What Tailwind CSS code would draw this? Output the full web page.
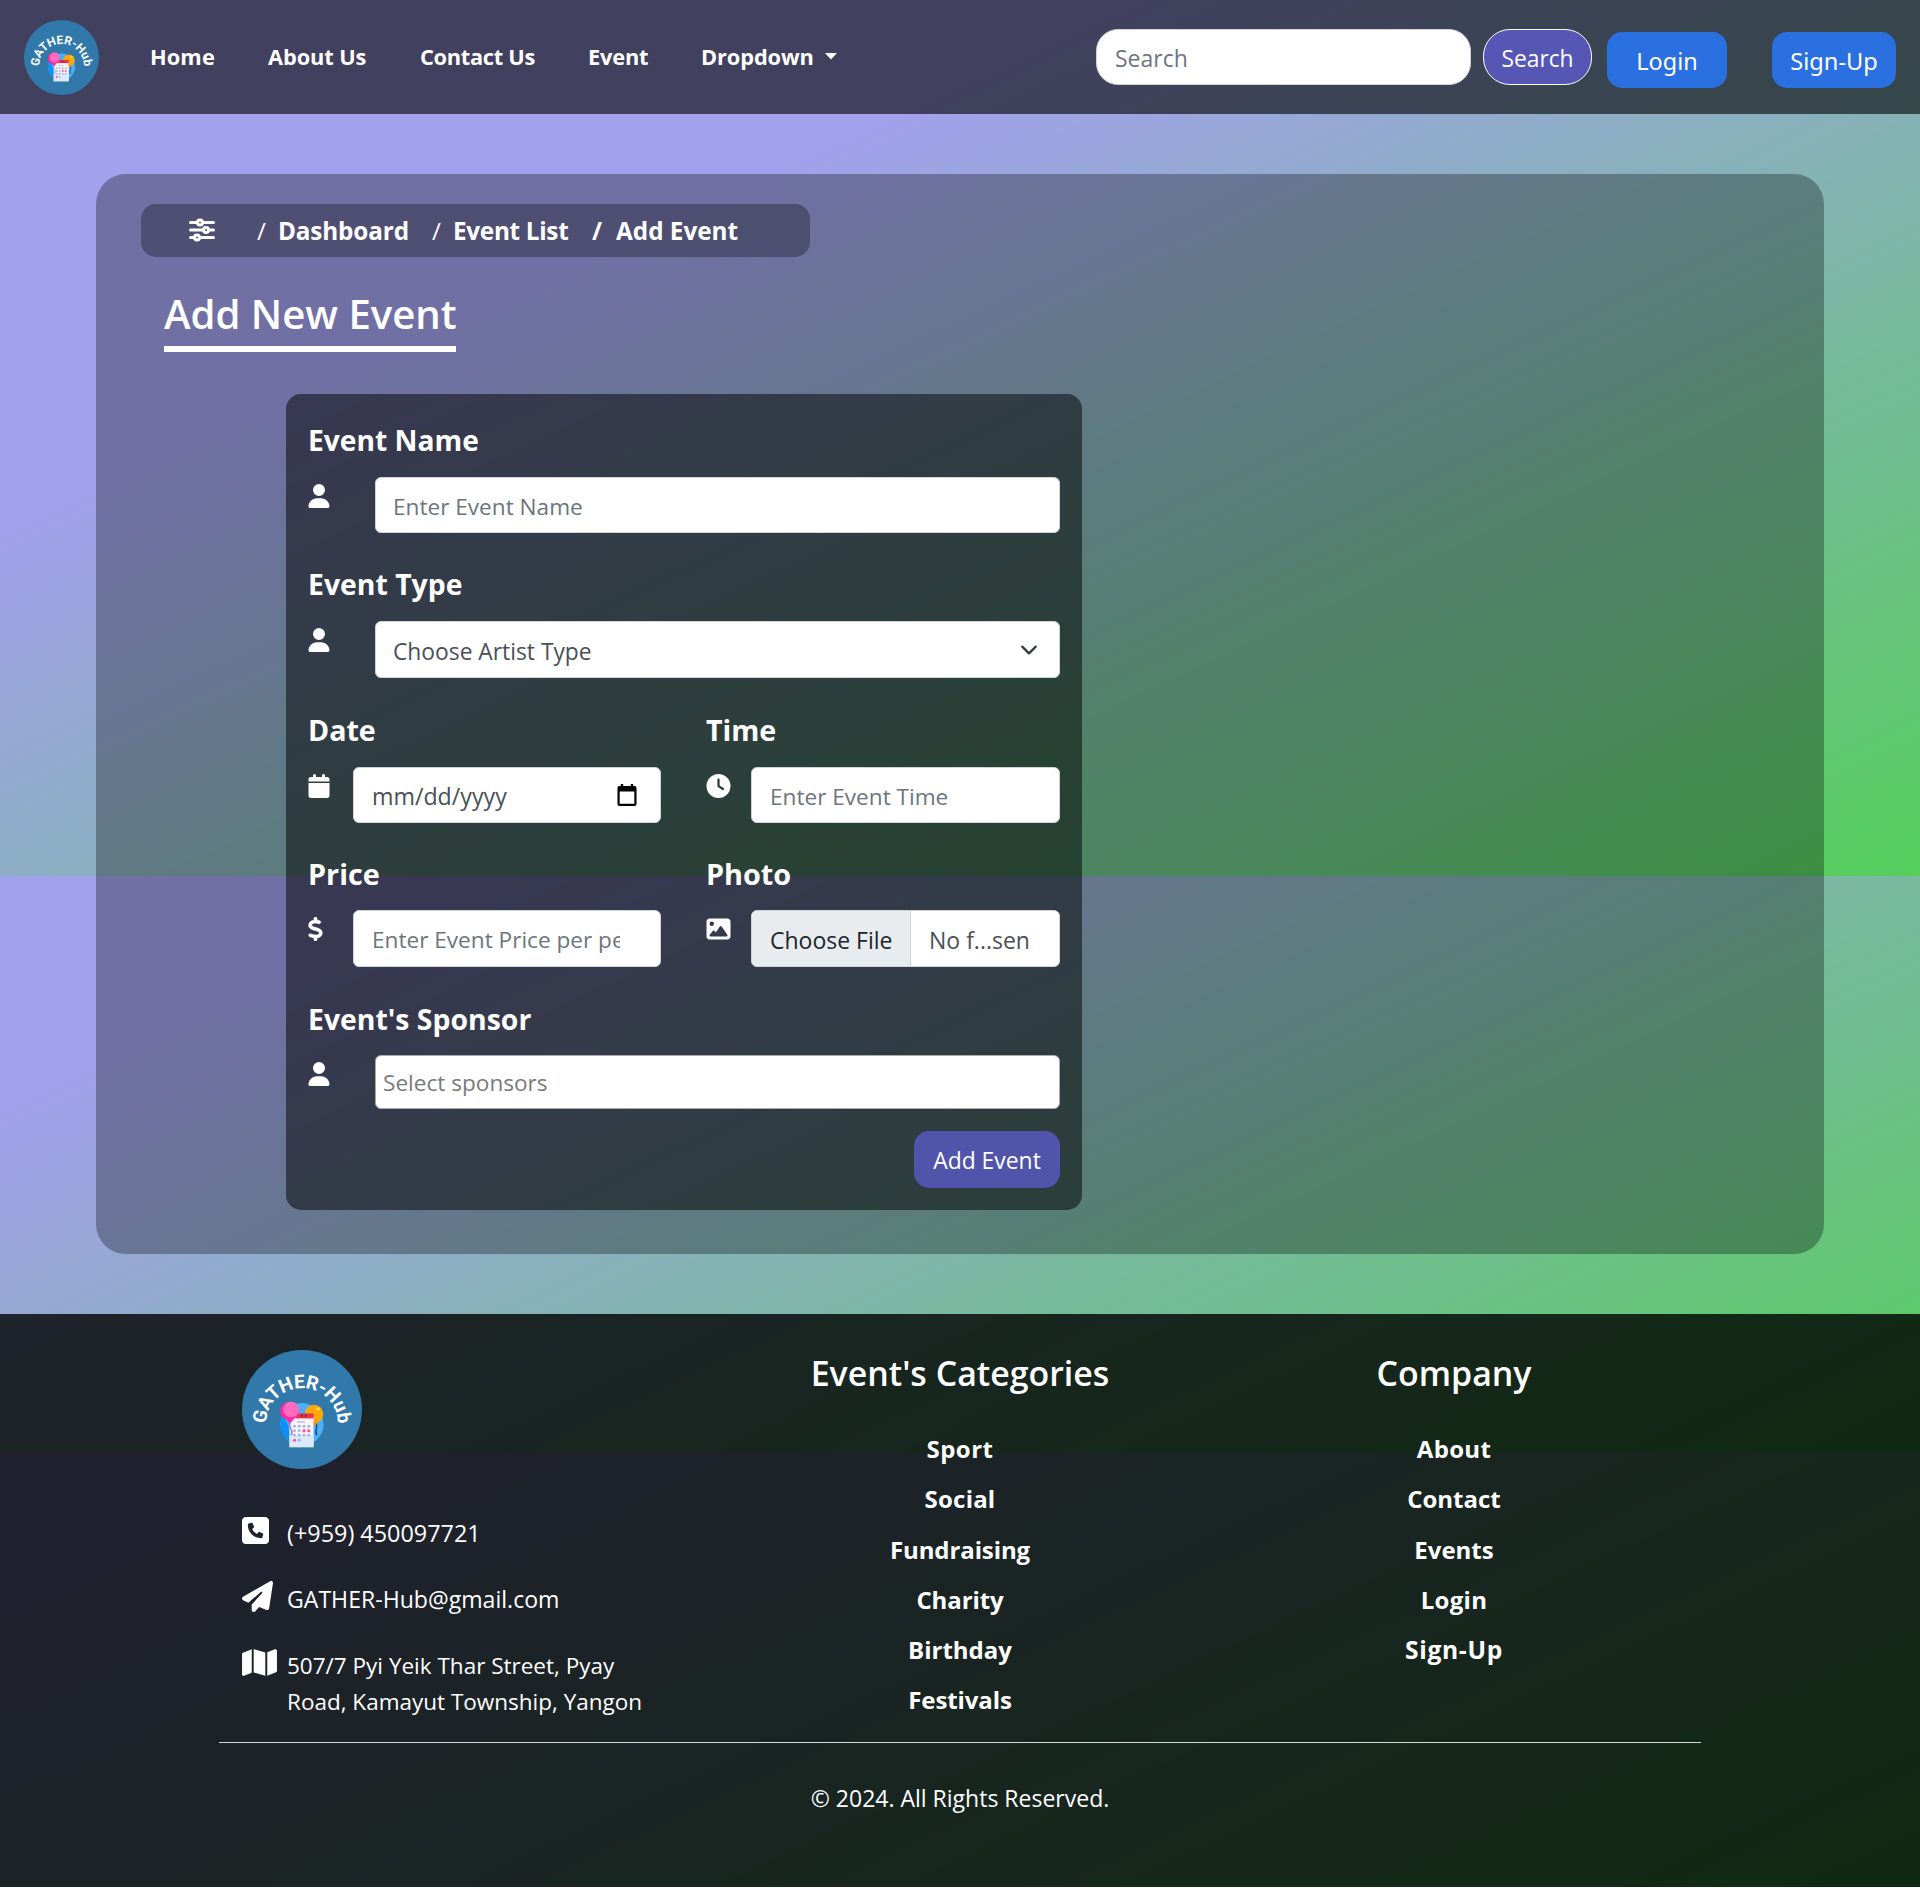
<!DOCTYPE html>
<html lang="en">
<head>
<meta charset="utf-8">
<title>GATHER-Hub | Add Event</title>
<script src="https://cdn.jsdelivr.net/npm/@tailwindcss/browser@4"></script>
</head>
<body class="w-[1920px] h-[1888px] overflow-x-hidden bg-white font-['Open_Sans','Noto_Sans',sans-serif] text-[22.6px] text-white">
<svg class="hidden">
  <symbol id="logo" viewBox="0 0 120 120">
    <defs><clipPath id="disk"><circle cx="60" cy="75" r="21.5"/></clipPath><path id="arc" d="M24 74.500A36 36 0 0 1 96 74.500"/></defs>
    <circle cx="60" cy="60" r="60" fill="#3079aa"/>
    <text fill="#fff" font-family="Roboto, sans-serif" font-weight="700" font-size="19"><textPath href="#arc" textLength="113" lengthAdjust="spacing">GATHER-Hub</textPath></text>
    <circle cx="60" cy="75" r="21.500" fill="#4bb0fb"/>
    <path d="M41 65a21.500 21.500 0 0 0 9 29l-4-18z" fill="#0a92fa"/>
    <path d="M73 73c5 5-2 8 2 13" fill="none" stroke="#0b4f8c" stroke-width="1.500"/>
    <circle cx="72" cy="64.500" r="9.300" fill="#fca80c"/><path d="M69 72l4 5 3-5z" fill="#fc8f00"/><ellipse cx="76" cy="59.500" rx="2" ry="1.500" fill="#ffe04a"/>
    <g clip-path="url(#disk)"><path d="M47.500 68h24v30h-24z" fill="#fdf3f6"/><path d="M47.500 86h24v12h-24z" fill="#dceafa"/></g>
    <path d="M54 64h17.500v5H54z" fill="#e6354d"/><path d="M59 65h1.500v2.500H59zm4 0h1.500v2.500H63z" fill="#8c1d38"/>
    <path d="M55 72.500h8" stroke="#a9c9ee" stroke-width="1.500"/>
    <g fill="#9dbbe6"><circle cx="52.500" cy="77" r="1.500"/><circle cx="57.200" cy="77" r="1.500"/><circle cx="62" cy="77" r="1.500"/><circle cx="66.800" cy="77" r="1.500"/><circle cx="52.500" cy="81.500" r="1.500"/><circle cx="57.200" cy="81.500" r="1.500"/><circle cx="52.500" cy="86" r="1.500"/><circle cx="57.200" cy="86" r="1.500"/><circle cx="62" cy="86" r="1.500"/><circle cx="66.800" cy="86" r="1.500"/><circle cx="57.200" cy="91" r="1.500"/></g>
    <g fill="#fb4fa8"><circle cx="62" cy="81.500" r="1.600"/><circle cx="66.800" cy="81.500" r="1.600"/><circle cx="52.500" cy="91" r="1.600"/></g>
    <path d="M48 73c-3 6 5 7 1 13" fill="none" stroke="#9b7bc4" stroke-width="1.500"/>
    <circle cx="47.600" cy="61.500" r="9.400" fill="#fb2aa2"/><circle cx="49.200" cy="60" r="7.900" fill="#ff6cc0"/><path d="M44.500 70h7l-3.500 4z" fill="#fb2aa2"/>
  </symbol>
  <symbol id="user" viewBox="0 0 448 512"><path d="M224 256A128 128 0 1 0 224 0a128 128 0 1 0 0 256zm-45.700 48C79.800 304 0 383.800 0 482.300C0 498.700 13.300 512 29.700 512H418.300c16.400 0 29.700-13.300 29.700-29.700C448 383.800 368.200 304 269.700 304H178.300z"/></symbol>
</svg>

<div class="h-[1887px] bg-no-repeat bg-[linear-gradient(155deg,#a2a1ec_30%,#55ce5c),linear-gradient(155deg,#a2a1ec_30%,#55ce5c),linear-gradient(155deg,#a2a1ec_30%,#55ce5c)] bg-[position:0_0,0_576px,0_1011px] bg-[size:100%_876px,100%_877px,100%_877px]">

  <nav class="flex h-[114px] bg-black/60 pl-6">
    <svg class="mt-5 size-[75px]"><use href="#logo"/></svg>
    <div class="ml-[51px] flex h-[114px] items-center text-[21.8px] font-bold">
      <a class="w-[118px] tracking-[0.1px]">Home</a>
      <a class="w-[152px] tracking-[-0.1px]">About Us</a>
      <a class="w-[168px] tracking-[-0.3px]">Contact Us</a>
      <a class="w-[113px] tracking-[-0.2px]">Event</a>
      <a class="w-[124px] tracking-[-0.1px]">Dropdown</a>
      <svg class="-mt-0.5 h-[7px] w-3" viewBox="0 0 12 7" fill="#fff"><path d="M0 0h12L6 6.500z"/></svg>
    </div>
    <input class="mt-[29px] ml-[259px] h-14 w-[375px] rounded-[22px] border border-[#ced4da] bg-white pt-0.5 pl-[18px] text-[23px] placeholder:text-[#6c757d]" placeholder="Search">
    <button class="mt-[29px] ml-3 h-14 w-[109px] rounded-[27px] border border-white bg-[#5656b4] pt-1 text-[22.8px]">Search</button>
    <button class="mt-8 ml-[15px] h-14 w-[120px] rounded-[15px] bg-[#2b70e0] pt-1 font-['Noto_Sans'] text-[23.4px]">Login</button>
    <button class="mt-8 ml-[45px] h-14 w-[124px] rounded-[15px] bg-[#2b70e0] pt-1 font-['Noto_Sans'] text-[23.6px]">Sign-Up</button>
  </nav>

  <main class="mx-24 mt-[60px] h-[1080px] rounded-[30px] bg-black/30 px-[45px] pt-[30px]">
    <div class="flex h-[53px] w-[669px] items-center rounded-[15px] bg-black/30 pl-12 text-[24.3px] font-bold leading-[51px]">
      <svg class="-mt-0.5 h-[26px] w-[68px]" viewBox="0 0 68 26" fill="none" stroke="#fff" stroke-width="3" stroke-linecap="round"><path d="M1.500 5.500h6M14.500 5.500h10M1.500 13h12M20.500 13h4M1.500 20.500h3M11.500 20.500h13"/><circle cx="11" cy="5.500" r="2.500"/><circle cx="17" cy="13" r="2.500"/><circle cx="8" cy="20.500" r="2.500"/></svg>
      <span class="w-[21px] font-normal">/</span><a class="w-[154px] tracking-[-0.15px]">Dashboard</a>
      <span class="w-[21px] font-normal">/</span><a class="w-[139px] tracking-[-0.3px]">Event List</a>
      <span class="w-[24px]">/</span><span>Add Event</span>
    </div>
    <div class="mt-[25px] ml-[23px] w-[292px] whitespace-nowrap border-b-6 border-white text-[40.1px] leading-[63px] font-semibold"><h1 class="h-[64px]">Add New Event</h1></div>

    <form class="mt-[42px] ml-[145px] flex h-[816px] w-[796px] flex-col rounded-[15px] bg-black/50 px-[22px] pt-7">
      <label class="text-[28.2px] leading-9 font-bold">Event Name</label>
      <div class="mt-[19px] flex h-14">
        <svg class="mt-[7px] h-6 w-[22px]" fill="#fff"><use href="#user"/></svg>
        <input class="ml-[45px] h-14 w-[685px] rounded-[6px] border border-[#ced4da] bg-white pt-0.5 pl-[17px] placeholder:text-[#6c757d]" placeholder="Enter Event Name">
      </div>

      <label class="mt-[33px] text-[28.4px] leading-9 font-bold">Event Type</label>
      <div class="mt-[19px] flex h-[57px]">
        <svg class="mt-[7px] h-6 w-[22px]" fill="#fff"><use href="#user"/></svg>
        <div class="ml-[45px] flex h-[57px] w-[685px] items-center justify-between rounded-[6px] border border-[#ced4da] bg-white pt-[5px] pr-[21px] pl-[17px] text-[22.8px] text-[#495057]"><span>Choose Artist Type</span>
          <svg class="-mt-[5px] h-[18px] w-[18px]" viewBox="0 0 16 16" fill="none" stroke="#343a40" stroke-width="2" stroke-linecap="round" stroke-linejoin="round"><path d="m2 5 6 6 6-6"/></svg></div>
      </div>

      <div class="mt-[34px] grid grid-cols-2 text-[28.6px] leading-9 font-bold"><label>Date</label><label class="pl-[22px]">Time</label></div>
      <div class="mt-[19px] flex h-14">
        <svg class="mt-[7px] h-6 w-[22px]" viewBox="0 0 448 512" fill="#fff"><path d="M96 32V64H48C21.500 64 0 85.500 0 112v48H448V112c0-26.500-21.500-48-48-48H352V32c0-17.700-14.300-32-32-32s-32 14.300-32 32V64H160V32c0-17.700-14.300-32-32-32S96 14.300 96 32zM448 192H0V464c0 26.500 21.500 48 48 48H400c26.500 0 48-21.500 48-48V192z"/></svg>
        <div class="ml-[23px] flex h-14 w-[308px] items-center justify-between rounded-[6px] border border-[#ced4da] bg-white pt-[3px] pr-[23px] pl-[18px] text-[23.2px] text-[#495057]"><span>mm/dd/yyyy</span>
          <svg class="-mt-[3px] h-[22px] w-[20px]" viewBox="0 0 21 22" preserveAspectRatio="none" fill="#000"><path d="M4 0h2.500v2h8V0H17v2h1.500A2 2 0 0 1 20.500 4v16a2 2 0 0 1-2 2h-16a2 2 0 0 1-2-2V4a2 2 0 0 1 2-2H4zM2.800 7.500v12.200h15.400V7.500z" fill-rule="evenodd"/></svg></div>
        <svg class="mt-[7px] ml-[45px] h-6 w-[25px]" viewBox="0 0 512 512" fill="#fff" fill-rule="evenodd"><path d="M256 0a256 256 0 1 1 0 512A256 256 0 1 1 256 0zM232 120V256c0 8 4 15.500 10.700 20l96 64c11 7.400 25.900 4.400 33.300-6.700s4.400-25.900-6.700-33.300L280 243.200V120c0-13.300-10.700-24-24-24s-24 10.700-24 24z"/></svg>
        <input class="ml-5 h-14 w-[309px] rounded-[6px] border border-[#ced4da] bg-white pt-0.5 pl-[18px] placeholder:text-[#6c757d]" placeholder="Enter Event Time">
      </div>

      <div class="mt-[33px] grid grid-cols-2 text-[28.8px] leading-9 font-bold"><label>Price</label><label class="pl-[22px]">Photo</label></div>
      <div class="mt-[18px] flex h-[57px]">
        <svg class="mt-[7px] h-6 w-[15px]" viewBox="0 0 320 512" fill="#fff"><path d="M160 0c17.700 0 32 14.300 32 32V67.700c1.600 .2 3.100 .4 4.700 .7c.4 .1 .7 .1 1.100 .2l48 8.800c17.400 3.200 28.900 19.900 25.700 37.200s-19.900 28.900-37.200 25.700l-47.500-8.700c-31.300-4.600-58.900-1.500-78.300 6.200s-27.200 18.300-29 28.100c-2 10.700-.5 16.700 1.200 20.400c1.800 3.900 5.500 8.300 12.800 13.200c16.300 10.700 41.300 17.700 73.700 26.300l2.900 .8c28.600 7.600 63.600 16.800 89.600 33.800c14.200 9.300 27.600 21.900 35.900 39.500c8.500 17.900 10.300 37.900 6.400 59.200c-6.900 38-33.100 63.400-65.600 76.700c-13.700 5.600-28.600 9.200-44.400 11V480c0 17.700-14.300 32-32 32s-32-14.300-32-32V445.100c-.4-.1-.9-.1-1.300-.2l-.2 0c-24.400-3.800-64.500-14.300-91.500-26.300c-16.100-7.200-23.400-26.100-16.200-42.200s26.100-23.400 42.200-16.200c20.900 9.300 55.300 18.500 75.200 21.600c31.900 4.700 58.200 2 76-5.300c16.900-6.900 24.600-16.900 26.800-28.900c1.900-10.600 .4-16.700-1.300-20.400c-1.900-4-5.600-8.400-13-13.300c-16.400-10.700-41.500-17.700-74-26.300l-2.800-.7C119.400 279.300 84.400 270 58.400 253c-14.200-9.300-27.500-22-35.800-39.600c-8.400-17.900-10.100-37.900-6.100-59.200C23.700 116 52.300 91.200 84.800 78.300c13.300-5.300 27.900-8.900 43.200-11V32c0-17.700 14.300-32 32-32z" stroke="#fff" stroke-width="14"/></svg>
        <input class="ml-[30px] h-[57px] w-[308px] rounded-[6px] border border-[#ced4da] bg-white pt-0.5 pr-10 pl-[18px] placeholder:text-[#6c757d]" placeholder="Enter Event Price per person">
        <svg class="mt-[7px] ml-[45px] h-6 w-[25px]" viewBox="0 0 512 512" fill="#fff" fill-rule="evenodd"><path d="M0 96C0 60.700 28.700 32 64 32H448c35.300 0 64 28.700 64 64V416c0 35.300-28.700 64-64 64H64c-35.300 0-64-28.700-64-64V96zM323.800 202.500c-4.500-6.600-11.900-10.500-19.800-10.500s-15.400 3.900-19.800 10.500l-87 127.600L170.700 297c-4.600-5.700-11.500-9-18.700-9s-14.200 3.300-18.700 9l-64 80c-5.800 7.200-6.900 17.100-2.900 25.400s12.400 13.600 21.600 13.600h96 32H424c8.900 0 17.100-4.900 21.200-12.800s3.600-17.400-1.400-24.700l-120-176zM112 192a48 48 0 1 0 0-96 48 48 0 1 0 0 96z"/></svg>
        <div class="ml-5 flex h-[57px] w-[309px] overflow-hidden rounded-[6px] border border-[#ced4da] bg-white text-[23px] leading-[58px] whitespace-nowrap"><span class="w-[159px] border-r border-[#ced4da] bg-[#e9ecef] pl-[18px] text-[#212529]">Choose File</span><span class="pl-[18px] text-[#495057]">No f...sen</span></div>
      </div>

      <label class="mt-[34px] text-[28.4px] leading-9 font-bold">Event's Sponsor</label>
      <div class="mt-[18px] flex h-[54px]">
        <svg class="mt-[7px] h-6 w-[22px]" fill="#fff"><use href="#user"/></svg>
        <input class="ml-[45px] h-[54px] w-[685px] rounded-[6px] border border-[#aaa] bg-white pl-[7px] text-[22.6px] placeholder:text-[#7a7a7a]" placeholder="Select sponsors">
      </div>
      <button class="mt-[22px] h-[57px] w-[146px] self-end rounded-[15px] bg-[#5055ab] pt-1 text-[22.9px]">Add Event</button>
    </form>
  </main>

  <footer class="mt-[60px] h-[573px] bg-black/80 px-[219px] pt-9">
    <div class="grid h-[393px] grid-cols-3 border-b border-[#d5dbd8]">
      <div class="pl-[22px]">
        <svg class="ml-px h-[119px] w-[120px]" viewBox="0 0 120 120" preserveAspectRatio="none"><use href="#logo"/></svg>
        <div class="mt-[46px] grid grid-cols-[46px_1fr] gap-y-[30px] leading-9 whitespace-nowrap">
          <svg class="ml-px h-[31px] w-[27px]" viewBox="0 0 448 512" fill="#fff" fill-rule="evenodd"><path d="M64 32C28.700 32 0 60.700 0 96V416c0 35.300 28.700 64 64 64H384c35.300 0 64-28.700 64-64V96c0-35.300-28.700-64-64-64H64zm90.700 96.700c9.700-2.600 19.900 2.300 23.700 11.600l20 48c3.400 8.200 1 17.600-5.800 23.200L168 231.700c16.600 35.200 45.100 63.700 80.300 80.300l20.200-24.700c5.600-6.800 15-9.200 23.200-5.800l48 20c9.300 3.900 14.200 14 11.600 23.700l-12 44C336.900 378 329 384 320 384C196.300 384 96 283.700 96 160c0-9 6-16.900 14.700-19.300l44-12z"/></svg>
          <span class="text-[23.4px]">(+959) 450097721</span>
          <svg class="ml-px size-[31px]" viewBox="0 0 512 512" fill="#fff"><path d="M498.100 5.600c10.100 7 15.400 19.100 13.500 31.200l-64 416c-1.500 9.700-7.400 18.200-16 23s-18.900 5.400-28 1.600L284 427.700l-68.500 74.100c-8.900 9.700-22.900 12.900-35.200 8.100S160 493.200 160 480V396.400c0-4 1.500-7.800 4.200-10.700L331.800 202.800c5.800-6.300 5.600-16-.4-22s-15.700-6.400-22-.7L106 360.800 17.700 316.600C7.100 311.300 .3 300.700 0 288.900s5.900-22.800 16.100-28.700l448-256c10.700-6.100 23.900-5.500 34 1.400z"/></svg>
          <span class="text-[23.1px]">GATHER-Hub@gmail.com</span>
          <svg class="ml-px h-[31px] w-[35px]" viewBox="0 0 576 512" fill="#fff"><path d="M384 476.100L192 421.200V35.900L384 90.800V476.100zm32-1.200V88.400L543.100 37.500c15.800-6.300 32.900 5.300 32.900 22.300V394.600c0 9.800-6 18.600-15.100 22.300L416 474.800zM15.100 95.100L160 37.200V423.600L32.900 474.500C17.100 480.800 0 469.200 0 452.200V117.400c0-9.800 6-18.600 15.100-22.300z"/></svg>
          <span class="pt-px text-[22.5px]">507/7 Pyi Yeik Thar Street, Pyay<br>Road, Kamayut Township, Yangon</span>
        </div>
      </div>
      <div class="-mt-px flex flex-col items-center text-[24px] leading-[50.3px] font-bold">
        <h2 class="mb-[27px] text-[33.9px] leading-12 font-semibold">Event's Categories</h2>
        <a class="tracking-[0.5px]">Sport</a><a class="tracking-[0.2px]">Social</a><a class="tracking-[-0.1px]">Fundraising</a><a class="tracking-[-0.1px]">Charity</a><a>Birthday</a><a class="tracking-[-0.1px]">Festivals</a>
      </div>
      <div class="-mt-px flex flex-col items-center text-[24px] leading-[50.3px] font-bold">
        <h2 class="mb-[27px] text-[33.9px] leading-12 font-semibold">Company</h2>
        <a class="tracking-[0.3px]">About</a><a>Contact</a><a>Events</a><a class="tracking-[0.3px]">Login</a><a class="text-[24.6px] tracking-[0.7px]">Sign-Up</a>
      </div>
    </div>
    <p class="mt-[37px] text-center text-[23px] leading-9">© 2024. All Rights Reserved.</p>
  </footer>
</div>
</body>
</html>
